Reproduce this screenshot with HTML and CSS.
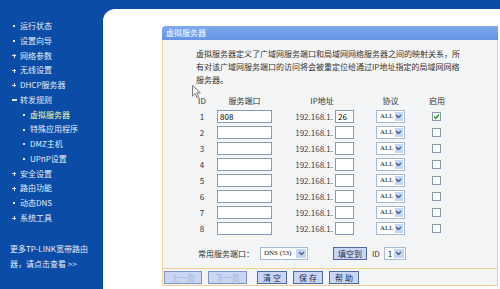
FILE: index.html
```html
<!DOCTYPE html>
<html lang="zh-CN">
<head>
<meta charset="utf-8">
<title>虚拟服务器</title>
<link rel="stylesheet" href="styles.css">
</head>
<body>
<div class="top"></div>
<div class="main">
  <nav class="side">
    <ul class="menu">
      <li class="m1"><i class="dot"></i>运行状态</li>
      <li class="m1"><i class="dot"></i>设置向导</li>
      <li class="m1"><i class="plus"></i>网络参数</li>
      <li class="m1"><i class="plus"></i>无线设置</li>
      <li class="m1"><i class="plus"></i>DHCP服务器</li>
      <li class="m1"><i class="minus"></i>转发规则</li>
      <li class="m2 cur"><i class="dot"></i>虚拟服务器</li>
      <li class="m2"><i class="dot"></i>特殊应用程序</li>
      <li class="m2"><i class="dot"></i>DMZ主机</li>
      <li class="m2"><i class="dot"></i>UPnP设置</li>
      <li class="m1"><i class="plus"></i>安全设置</li>
      <li class="m1"><i class="plus"></i>路由功能</li>
      <li class="m1"><i class="dot"></i>动态DNS</li>
      <li class="m1"><i class="plus"></i>系统工具</li>
    </ul>
    <p class="more">更多TP-LINK宽带路由<br>器，请点击查看 &gt;&gt;</p>
  </nav>
  <div class="content">
    <section class="panel">
      <div class="ph">虚拟服务器</div>
      <div class="pb">
        <p class="desc">虚拟服务器定义了广域网服务端口和局域网网络服务器之间的映射关系，所<br>有对该广域网服务端口的访问将会被重定位给通过IP地址指定的局域网网络<br>服务器。</p>
        <div class="grid">
          <div class="hd c1">ID</div>
          <div class="hd c2">服务端口</div>
          <div class="hd c3">IP地址</div>
          <div class="hd c4">协议</div>
          <div class="hd c5">启用</div>

          <div class="c1">1</div>
          <div class="c2"><input class="port" type="text" value="808"></div>
          <div class="c3"><span class="ip">192.168.1.</span><input class="oct" type="text" value="26"></div>
          <div class="c4"><span class="sel proto"><span class="v">ALL</span><span class="a"><svg width="7" height="5" viewBox="0 0 7 5"><path d="M1 1 L3.5 3.5 L6 1" fill="none" stroke="#4d6185" stroke-width="1.5"/></svg></span></span></div>
          <div class="c5"><span class="cb on"><svg width="7" height="7" viewBox="0 0 7 7"><path d="M1 3.5 L2.8 5.3 L6 1.5" fill="none" stroke="#21a121" stroke-width="1.5"/></svg></span></div>

          <div class="c1">2</div>
          <div class="c2"><input class="port" type="text"></div>
          <div class="c3"><span class="ip">192.168.1.</span><input class="oct" type="text"></div>
          <div class="c4"><span class="sel proto"><span class="v">ALL</span><span class="a"><svg width="7" height="5" viewBox="0 0 7 5"><path d="M1 1 L3.5 3.5 L6 1" fill="none" stroke="#4d6185" stroke-width="1.5"/></svg></span></span></div>
          <div class="c5"><span class="cb"></span></div>

          <div class="c1">3</div>
          <div class="c2"><input class="port" type="text"></div>
          <div class="c3"><span class="ip">192.168.1.</span><input class="oct" type="text"></div>
          <div class="c4"><span class="sel proto"><span class="v">ALL</span><span class="a"><svg width="7" height="5" viewBox="0 0 7 5"><path d="M1 1 L3.5 3.5 L6 1" fill="none" stroke="#4d6185" stroke-width="1.5"/></svg></span></span></div>
          <div class="c5"><span class="cb"></span></div>

          <div class="c1">4</div>
          <div class="c2"><input class="port" type="text"></div>
          <div class="c3"><span class="ip">192.168.1.</span><input class="oct" type="text"></div>
          <div class="c4"><span class="sel proto"><span class="v">ALL</span><span class="a"><svg width="7" height="5" viewBox="0 0 7 5"><path d="M1 1 L3.5 3.5 L6 1" fill="none" stroke="#4d6185" stroke-width="1.5"/></svg></span></span></div>
          <div class="c5"><span class="cb"></span></div>

          <div class="c1">5</div>
          <div class="c2"><input class="port" type="text"></div>
          <div class="c3"><span class="ip">192.168.1.</span><input class="oct" type="text"></div>
          <div class="c4"><span class="sel proto"><span class="v">ALL</span><span class="a"><svg width="7" height="5" viewBox="0 0 7 5"><path d="M1 1 L3.5 3.5 L6 1" fill="none" stroke="#4d6185" stroke-width="1.5"/></svg></span></span></div>
          <div class="c5"><span class="cb"></span></div>

          <div class="c1">6</div>
          <div class="c2"><input class="port" type="text"></div>
          <div class="c3"><span class="ip">192.168.1.</span><input class="oct" type="text"></div>
          <div class="c4"><span class="sel proto"><span class="v">ALL</span><span class="a"><svg width="7" height="5" viewBox="0 0 7 5"><path d="M1 1 L3.5 3.5 L6 1" fill="none" stroke="#4d6185" stroke-width="1.5"/></svg></span></span></div>
          <div class="c5"><span class="cb"></span></div>

          <div class="c1">7</div>
          <div class="c2"><input class="port" type="text"></div>
          <div class="c3"><span class="ip">192.168.1.</span><input class="oct" type="text"></div>
          <div class="c4"><span class="sel proto"><span class="v">ALL</span><span class="a"><svg width="7" height="5" viewBox="0 0 7 5"><path d="M1 1 L3.5 3.5 L6 1" fill="none" stroke="#4d6185" stroke-width="1.5"/></svg></span></span></div>
          <div class="c5"><span class="cb"></span></div>

          <div class="c1">8</div>
          <div class="c2"><input class="port" type="text"></div>
          <div class="c3"><span class="ip">192.168.1.</span><input class="oct" type="text"></div>
          <div class="c4"><span class="sel proto"><span class="v">ALL</span><span class="a"><svg width="7" height="5" viewBox="0 0 7 5"><path d="M1 1 L3.5 3.5 L6 1" fill="none" stroke="#4d6185" stroke-width="1.5"/></svg></span></span></div>
          <div class="c5"><span class="cb"></span></div>
        </div>
        <div class="common">
          <span class="lbl">常用服务端口：</span>
          <span class="sel svc"><span class="v">DNS (53)</span><span class="a"><svg width="7" height="5" viewBox="0 0 7 5"><path d="M1 1 L3.5 3.5 L6 1" fill="none" stroke="#4d6185" stroke-width="1.5"/></svg></span></span>
          <button class="btn fill" type="button">填空到</button>
          <span class="idl">ID</span>
          <span class="sel idsel"><span class="v">1</span><span class="a"><svg width="7" height="5" viewBox="0 0 7 5"><path d="M1 1 L3.5 3.5 L6 1" fill="none" stroke="#4d6185" stroke-width="1.5"/></svg></span></span>
        </div>
      </div>
      <div class="pf">
        <button class="btn prev dis" type="button">上一页</button>
        <button class="btn next dis" type="button">下一页</button>
        <button class="btn sm clr" type="button">清 空</button>
        <button class="btn sm" type="button">保 存</button>
        <button class="btn sm" type="button">帮 助</button>
      </div>
      <svg class="cursor" width="10" height="14" viewBox="0 0 10 14"><path d="M0.5 0.5 L0.5 11 L3.2 8.4 L5.2 12.8 L6.8 12.1 L4.8 7.8 L8.3 7.8 Z" fill="#fff" stroke="#6a6a6a" stroke-width="0.9" stroke-linejoin="round"/></svg>
    </section>
  </div>
</div>
</body>
</html>
```
FILE: styles.css
```css
* { box-sizing: border-box; }
html, body { margin: 0; padding: 0; }
body {
  width: 500px;
  height: 289px;
  overflow: hidden;
  background: #0a4ca6;
  font-family: "Noto Sans CJK SC", "Noto Sans", sans-serif;
  font-size: 8px;
  color: #333;
}
.top { height: 9px; }
.main { display: flex; height: 280px; }

.side { width: 103px; flex: none; color: #e4ecf8; }
.menu { list-style: none; margin: 0; padding: 10px 0 0 0; }
.menu li { height: 14.75px; line-height: 14.75px; display: flex; align-items: center; white-space: nowrap; }
.menu .m1 { padding-left: 12px; }
.menu .m2 { padding-left: 22px; }
.menu .cur { color: #fff9a8; }
.menu i { display: inline-block; flex: none; margin-right: 5px; position: relative; }
.menu i.dot { width: 2px; height: 2px; margin-left: 1px; margin-right: 5px; background: #dfe7f5; }
.menu i.plus { width: 4px; height: 4px; margin-right: 4px; }
.menu i.plus::before, .menu i.plus::after { content: ""; position: absolute; background: #dfe7f5; }
.menu i.plus::before { left: 0; top: 1.5px; width: 4px; height: 1px; }
.menu i.plus::after { left: 1.5px; top: 0; width: 1px; height: 4px; }
.menu i.minus { width: 5px; height: 1.5px; margin-right: 3px; background: #dfe7f5; }
.more { margin: 15px 0 0 10px; line-height: 15px; color: #e4ecf8; white-space: nowrap; }

.content {
  flex: 1;
  background: #fff;
  border-top-left-radius: 12px;
  padding: 17px 2px 0 59px;
}
.panel {
  position: relative;
  width: 336px;
  height: 260px;
  border: 1px solid #efcf94;
  border-top: 0;
  border-radius: 4px 0 0 0;
  background: #f4f5f7;
  display: flex;
  flex-direction: column;
}
.ph {
  height: 14px;
  margin: 0 -1px;
  padding-left: 4px;
  line-height: 14px;
  color: #fff;
  background: linear-gradient(#80a8ee, #6494e6);
  border-radius: 4px 0 0 0;
}
.pb { height: 228px; padding-top: 7px; }
.desc { margin: 0 0 6px 33px; line-height: 13px; white-space: nowrap; color: #333; }

.grid {
  display: grid;
  margin-left: 29px;
  grid-template-columns: 25px 55px 82px 51px 40px;
  grid-auto-rows: 16px;
  align-items: center;
}
.grid > div { display: flex; align-items: center; height: 16px; }
.c1 { justify-content: center; padding-right: 5px; }
.c2 { justify-content: center; }
.c3 { justify-content: flex-end; }
.c4 { justify-content: flex-end; }
.c5 { padding-left: 27px; }
.hd.c3 { justify-content: center; padding-left: 18px; }
.hd.c4 { justify-content: center; padding-left: 22px; }
.hd.c5 { padding-left: 24px; }

input {
  font: inherit;
  color: #000;
  height: 13px;
  border: 1px solid #7f9db9;
  background: #fff;
  padding: 0 2px;
  margin: 0;
  outline: none;
}
.port { width: 55px; }
.oct { width: 19px; margin-left: 2px; }
.ip { color: #444; }

.sel {
  display: inline-flex;
  height: 13px;
  border: 1px solid #a5b9d2;
  background: #fff;
  align-items: stretch;
}
.sel .v { flex: 1; padding-left: 3px; line-height: 11px; color: #222; white-space: nowrap; }
.sel .a {
  width: 10px;
  margin: 1px;
  background: #c6d6fb;
  display: flex;
  align-items: center;
  justify-content: center;
}
.proto { width: 29px; }
.proto .v { font-family: "Liberation Serif", serif; font-size: 7px; }
.cb {
  width: 9px;
  height: 9px;
  border: 1px solid #8799ad;
  background: #fff;
  display: flex;
  align-items: center;
  justify-content: center;
}

.common { display: flex; align-items: center; height: 16px; margin-top: 9px; padding-left: 35px; }
.lbl { width: 57px; white-space: nowrap; }
.svc { width: 48px; margin-left: 5px; }
.svc .v { font-family: "Liberation Serif", serif; font-size: 7px; }
.idl { margin-left: 5px; }
.idsel { width: 22px; margin-left: 4px; }

.btn {
  font: inherit;
  height: 13px;
  padding: 0;
  margin: 0;
  line-height: 11px;
  border: 1px solid #55689a;
  background: #c9d6f5;
  color: #1e2a48;
}
.fill { width: 34px; margin-left: 25px; }
.pf {
  flex: 1;
  border-top: 1px solid #efcf94;
  display: flex;
  align-items: center;
  padding-left: 1px;
}
.prev { width: 38px; }
.next { width: 39px; margin-left: 6px; }
.sm { width: 30px; margin-left: 6px; }
.clr { margin-left: 10px; }
.dis { color: #9fb0d8; border-color: #8193c0; }
.cursor { position: absolute; left: 29px; top: 59px; }
```
